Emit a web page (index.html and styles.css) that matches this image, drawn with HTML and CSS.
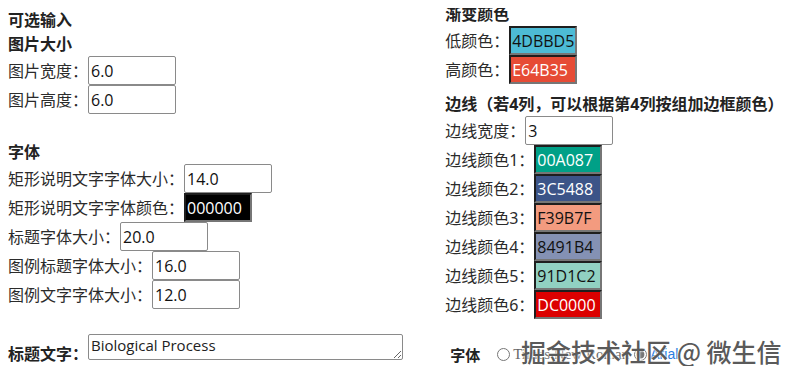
FILE: index.html
```html
<!DOCTYPE html>
<html lang="zh">
<head>
  <meta charset="UTF-8">
  <title>可选输入</title>
  <link rel="stylesheet" href="styles.css">
</head>
<body>

  <div class="page">
    <div class="col left">
      <div class="heading">可选输入</div>
      <div class="heading">图片大小</div>
      <div class="row"><label>图片宽度：</label><input class="num" type="text" value="6.0"></div>
      <div class="row"><label>图片高度：</label><input class="num" type="text" value="6.0"></div>

      <div class="heading gap">字体</div>
      <div class="row"><label>矩形说明文字字体大小：</label><input class="num" type="text" value="14.0"></div>
      <div class="row"><label>矩形说明文字字体颜色：</label><input class="color light" type="text" value="000000" style="background:#000000"></div>
      <div class="row"><label>标题字体大小：</label><input class="num" type="text" value="20.0"></div>
      <div class="row"><label>图例标题字体大小：</label><input class="num" type="text" value="16.0"></div>
      <div class="row"><label>图例文字字体大小：</label><input class="num" type="text" value="12.0"></div>

      <div class="title-row">
        <label class="bold">标题文字：</label>
        <textarea>Biological Process</textarea>
      </div>
    </div>

    <div class="col right">
      <div class="heading">渐变颜色</div>
      <div class="row"><label>低颜色：</label><input class="color" type="text" value="4DBBD5" style="background:#4DBBD5"></div>
      <div class="row"><label>高颜色：</label><input class="color light" type="text" value="E64B35" style="background:#E64B35"></div>

      <div class="heading small-gap">边线（若4列，可以根据第4列按组加边框颜色）</div>
      <div class="row"><label>边线宽度：</label><input class="num" type="text" value="3"></div>
      <div class="row"><label>边线颜色1：</label><input class="color light" type="text" value="00A087" style="background:#00A087"></div>
      <div class="row"><label>边线颜色2：</label><input class="color light" type="text" value="3C5488" style="background:#3C5488"></div>
      <div class="row"><label>边线颜色3：</label><input class="color" type="text" value="F39B7F" style="background:#F39B7F"></div>
      <div class="row"><label>边线颜色4：</label><input class="color" type="text" value="8491B4" style="background:#8491B4"></div>
      <div class="row"><label>边线颜色5：</label><input class="color" type="text" value="91D1C2" style="background:#91D1C2"></div>
      <div class="row"><label>边线颜色6：</label><input class="color light" type="text" value="DC0000" style="background:#DC0000"></div>

      <div class="font-row">
        <span class="bold">字体</span>
        <label class="radio"><input type="radio" name="font"><span class="times">Times New Roman</span></label>
        <label class="radio"><input type="radio" name="font" checked><span class="arial">Arial</span></label>
      </div>
    </div>

    <div class="watermark">掘金技术社区 @ 微生信</div>
  </div>

</body>
</html>
```

FILE: styles.css
```css
body {
  margin: 8px;
  font-family: "Noto Sans", "Noto Sans CJK SC", sans-serif;
  font-size: 16px;
  color: #2b2b2b;
  background: white;
}

.page {
  position: relative;
  display: flex;
}

.col {
  display: flex;
  flex-direction: column;
}

.left {
  width: 439px;
}

.right {
  margin-top: -6px;
}

.heading {
  height: 24px;
  line-height: 24px;
  font-weight: bold;
  color: #222;
}

.heading.gap {
  margin-top: 26px;
}

.heading.small-gap {
  margin-top: 8px;
}

.row {
  display: flex;
  align-items: center;
  height: 29px;
}

.row label {
  line-height: 24px;
  white-space: nowrap;
}

input {
  font-family: "Open Sans", "Noto Sans", sans-serif;
  font-size: 16px;
  box-sizing: border-box;
  height: 29px;
  margin: 0;
  color: #111;
}

.num {
  width: 88px;
  padding: 0 2px;
  border: 1px solid #8a8a8a;
  border-radius: 2px;
  background: white;
}

.color {
  width: 68px;
  padding: 0 1px;
  border: 2px solid;
  border-color: #1e1e1e #767676 #767676 #1e1e1e;
}

.color.light {
  color: white;
}

.title-row {
  display: flex;
  align-items: flex-start;
  margin-top: 25px;
}

.bold {
  font-weight: bold;
  color: #222;
}

.title-row label {
  margin-top: 8px;
  line-height: 24px;
}

textarea {
  box-sizing: border-box;
  width: 315px;
  height: 26px;
  margin: 0;
  padding: 0 2px;
  font-family: "Open Sans", "Noto Sans", sans-serif;
  font-size: 15px;
  line-height: 20px;
  border: 1px solid #8a8a8a;
  border-radius: 2px;
  color: #222;
  resize: both;
  overflow: hidden;
}

.font-row {
  display: flex;
  align-items: center;
  height: 24px;
  margin-top: 23px;
  padding-left: 5px;
  font-size: 15px;
}

.font-row .bold {
  margin-right: 12px;
}

.radio {
  display: flex;
  align-items: center;
}

.radio input {
  width: 13px;
  height: 13px;
  margin: 0 3px 0 5px;
  accent-color: #777;
}

.times {
  font-family: "Liberation Serif", serif;
  color: #666;
}

.arial {
  font-family: "Liberation Sans", sans-serif;
  font-size: 14px;
  color: #2a7de1;
}

.watermark {
  position: absolute;
  left: 513px;
  top: 325px;
  font-family: "Noto Sans CJK SC", sans-serif;
  font-size: 25px;
  font-weight: 500;
  line-height: 36px;
  color: #5a5a5a;
  text-shadow: 0 0 2px white, 0 0 2px white;
  pointer-events: none;
  white-space: nowrap;
}
```
